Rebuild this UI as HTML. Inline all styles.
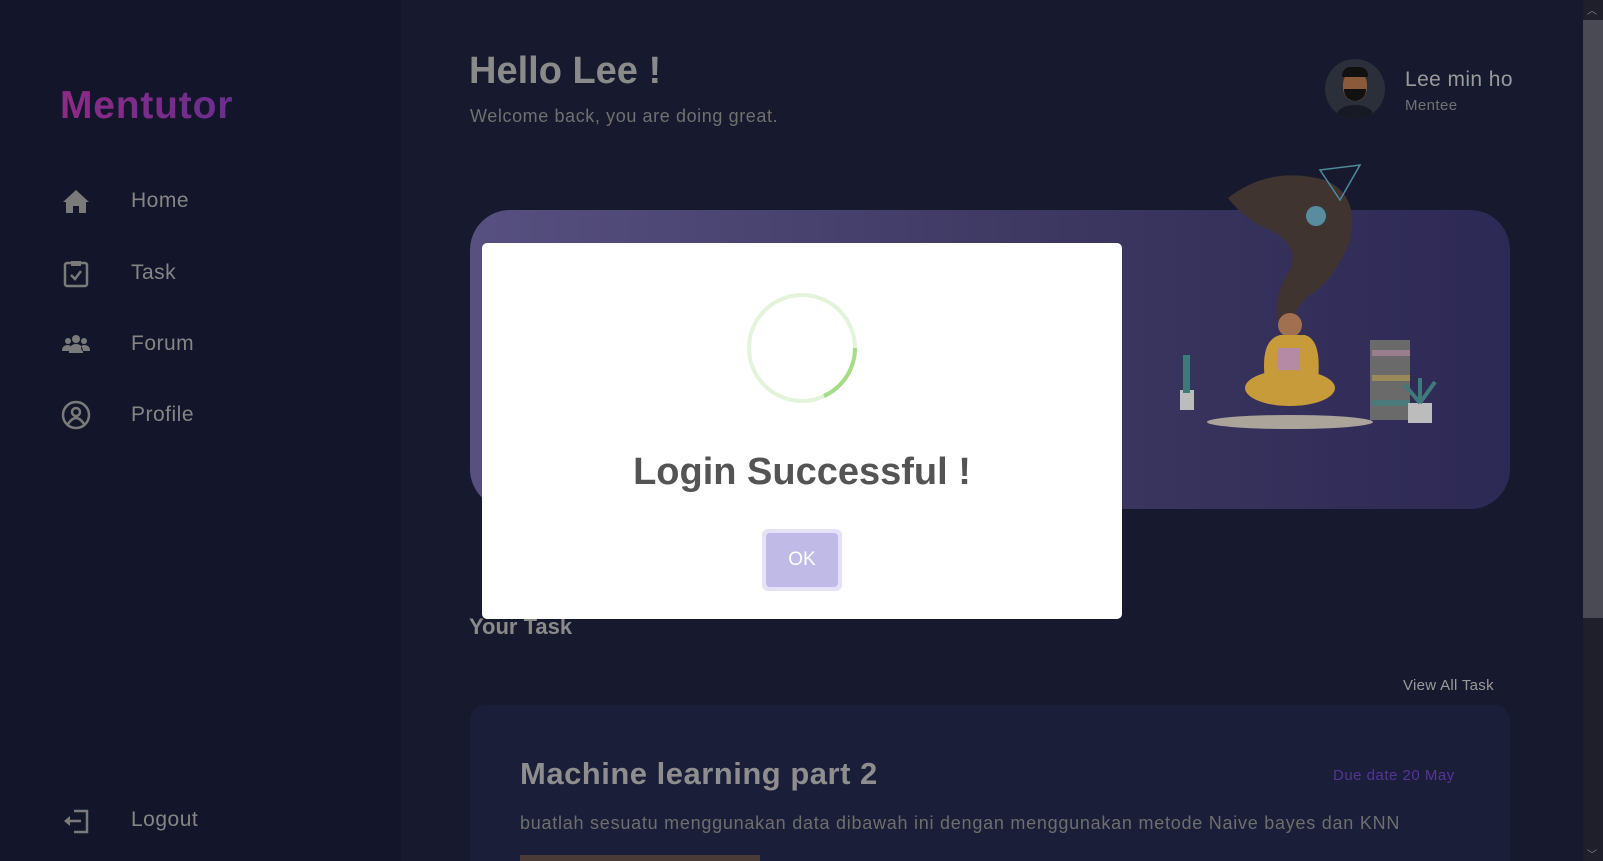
<!DOCTYPE html>
<html style="overflow:hidden;height:861px"><head><meta charset="utf-8"><style>
*{margin:0;padding:0;box-sizing:border-box}
body{width:1603px;height:861px;overflow:hidden;background:#171a2f;font-family:"Liberation Sans",sans-serif;position:relative}
.sb{position:absolute;left:0;top:0;width:401px;height:861px;background:#13162a}
.logo{position:absolute;left:60px;top:84px;font-size:39px;font-weight:bold;background:linear-gradient(90deg,#8e2a84,#6a2e90);-webkit-background-clip:text;color:transparent;letter-spacing:0.8px}
.nav{position:absolute;left:61px;display:flex;align-items:center;color:#858585;font-size:21px;letter-spacing:0.5px}
.nav svg{width:30px;height:30px;margin-right:40px}
.t{position:absolute;white-space:nowrap}
.scroll{position:absolute;left:1583px;top:0;width:20px;height:861px;background:#1e1f2b}
.thumb{position:absolute;left:1583px;top:20px;width:20px;height:598px;background:#4a4a55}
</style></head><body>
<div class="sb"></div>
<div class="logo">Mentutor</div>
<div class="nav" style="top:186px"><svg viewBox="0 0 30 30"><path d="M15 4 L28 16 H25 V27 H18 V20 H12 V27 H5 V16 H2 Z" fill="#7a7a7a"/></svg>Home</div>
<div class="nav" style="top:258px"><svg viewBox="0 0 30 30"><rect x="4" y="5" width="22" height="23" rx="2" fill="none" stroke="#7a7a7a" stroke-width="2.5"/><rect x="10" y="3" width="10" height="5" fill="#7a7a7a"/><path d="M10 17 L14 21 L20 13" fill="none" stroke="#7a7a7a" stroke-width="2.5"/></svg>Task</div>
<div class="nav" style="top:329px"><svg viewBox="0 0 30 30"><circle cx="15" cy="10" r="4" fill="#7a7a7a"/><circle cx="7" cy="12" r="3" fill="#7a7a7a"/><circle cx="23" cy="12" r="3" fill="#7a7a7a"/><path d="M8 24 Q8 15 15 15 Q22 15 22 24Z M1 22 Q1 16 7 16 Q10 16 10 19 L9 22Z M29 22 Q29 16 23 16 Q20 16 20 19 L21 22Z" fill="#7a7a7a"/></svg>Forum</div>
<div class="nav" style="top:400px"><svg viewBox="0 0 30 30"><circle cx="15" cy="15" r="13" fill="none" stroke="#7a7a7a" stroke-width="2.5"/><circle cx="15" cy="12" r="4" fill="none" stroke="#7a7a7a" stroke-width="2.5"/><path d="M7 24 Q11 18 15 18 Q19 18 23 24" fill="none" stroke="#7a7a7a" stroke-width="2.5"/></svg>Profile</div>
<div class="nav" style="top:805px"><svg viewBox="0 0 30 30"><path d="M13 6 H26 V27 H13" fill="none" stroke="#7a7a7a" stroke-width="2.5"/><path d="M20 16 H6" stroke="#7a7a7a" stroke-width="2.5"/><path d="M3 16 L9 11 V21Z" fill="#7a7a7a"/></svg>Logout</div>

<div class="t" style="left:469px;top:50px;font-size:38px;font-weight:bold;color:#8a8a8a">Hello Lee !</div>
<div class="t" style="left:470px;top:106px;font-size:18px;color:#707070;letter-spacing:0.6px">Welcome back, you are doing great.</div>

<div style="position:absolute;left:1325px;top:59px;width:60px;height:60px;border-radius:50%;background:#2b2f3a;overflow:hidden">
<div style="position:absolute;left:18px;top:12px;width:24px;height:30px;border-radius:45%;background:#8a5a3a"></div>
<div style="position:absolute;left:17px;top:8px;width:26px;height:10px;border-radius:10px 10px 2px 2px;background:#111"></div>
<div style="position:absolute;left:19px;top:30px;width:22px;height:12px;border-radius:0 0 12px 12px;background:#111"></div>
<div style="position:absolute;left:12px;top:46px;width:36px;height:20px;border-radius:50% 50% 0 0;background:#171a25"></div></div>
<div class="t" style="left:1405px;top:68px;font-size:21px;color:#9a9a9a;letter-spacing:0.4px">Lee min ho</div>
<div class="t" style="left:1405px;top:97px;font-size:15px;color:#727272;letter-spacing:0.4px">Mentee</div>

<div style="position:absolute;left:470px;top:210px;width:1040px;height:299px;border-radius:40px;background:linear-gradient(90deg,#575080,#3b365f 60%,#2d2955)"></div>
<svg style="position:absolute;left:1150px;top:160px" width="330" height="290" viewBox="0 0 330 290">
<path d="M78 38 Q120 5 175 20 Q210 35 200 80 Q185 120 160 135 Q140 150 145 170 L130 170 Q120 140 140 110 Q150 85 120 70 Q95 60 78 38Z" fill="#3f3430"/>
<path d="M170 10 L210 5 L190 40 Z" fill="none" stroke="#4f8a9a" stroke-width="1.5"/>
<circle cx="166" cy="56" r="10" fill="#5a8ca0"/>
<circle cx="140" cy="165" r="12" fill="#a07050"/>
<path d="M115 220 Q110 180 130 175 H155 Q172 180 168 220Z" fill="#c79a3a"/>
<rect x="128" y="188" width="22" height="28" fill="#b58aa5"/>
<ellipse cx="140" cy="228" rx="45" ry="18" fill="#c79a3a"/>
<ellipse cx="140" cy="262" rx="83" ry="7" fill="#aaa49a"/>
<rect x="30" y="230" width="14" height="20" fill="#bcbcbc"/>
<rect x="33" y="195" width="7" height="38" fill="#3f7a7a"/>
<rect x="220" y="180" width="40" height="80" fill="#6a6a6a"/>
<rect x="222" y="190" width="38" height="6" fill="#9a7e8e"/><rect x="222" y="215" width="38" height="6" fill="#9a8a5a"/><rect x="222" y="240" width="38" height="6" fill="#4a7a7a"/>
<rect x="258" y="243" width="24" height="20" fill="#bcbcbc"/>
<path d="M270 243 L255 225 M270 243 L285 222 M270 243 L270 218" stroke="#3f7a7a" stroke-width="4"/>
</svg>

<div class="t" style="left:469px;top:614px;font-size:22px;font-weight:bold;color:#8a8a8a">Your Task</div>
<div class="t" style="left:1403px;top:677px;font-size:15px;color:#9a9a9a;letter-spacing:0.3px">View All Task</div>
<div style="position:absolute;left:470px;top:705px;width:1040px;height:156px;border-radius:15px 15px 0 0;background:#1b1e38"></div>
<div class="t" style="left:520px;top:756px;font-size:31px;font-weight:bold;color:#8e8e8e;letter-spacing:0.5px">Machine learning part 2</div>
<div class="t" style="left:1333px;top:767px;font-size:15px;color:#55349a;letter-spacing:0.5px">Due date 20 May</div>
<div class="t" style="left:520px;top:813px;font-size:18px;color:#6e6e6e;letter-spacing:0.75px">buatlah sesuatu menggunakan data dibawah ini dengan menggunakan metode Naive bayes dan KNN</div>
<div style="position:absolute;left:520px;top:855px;width:240px;height:10px;background:#4a3b36"></div>

<div style="position:absolute;left:482px;top:243px;width:640px;height:376px;background:#fff;border-radius:5px"></div>
<svg style="position:absolute;left:746px;top:292px" width="112" height="112" viewBox="0 0 112 112">
<circle cx="56" cy="56" r="53" fill="none" stroke="#e3f4da" stroke-width="4"/>
<path d="M109 56 A53 53 0 0 1 78 104" fill="none" stroke="#a5dc86" stroke-width="4"/>
</svg>
<div class="t" style="left:482px;width:640px;text-align:center;top:451px;font-size:38px;font-weight:bold;color:#545454">Login Successful !</div>
<div style="position:absolute;left:762px;top:529px;width:80px;height:62px;border-radius:6px;background:#e4e1f8"></div>
<div style="position:absolute;left:766px;top:533px;width:72px;height:54px;border-radius:4px;background:#c0bbe6;color:#fff;font-size:19px;text-align:center;line-height:54px">OK</div>

<div class="scroll"></div><div class="thumb"></div>
<div class="t" style="left:1587px;top:2px;font-size:10px;color:#888">︿</div>
<div class="t" style="left:1587px;top:846px;font-size:10px;color:#888">﹀</div>
</body></html>
